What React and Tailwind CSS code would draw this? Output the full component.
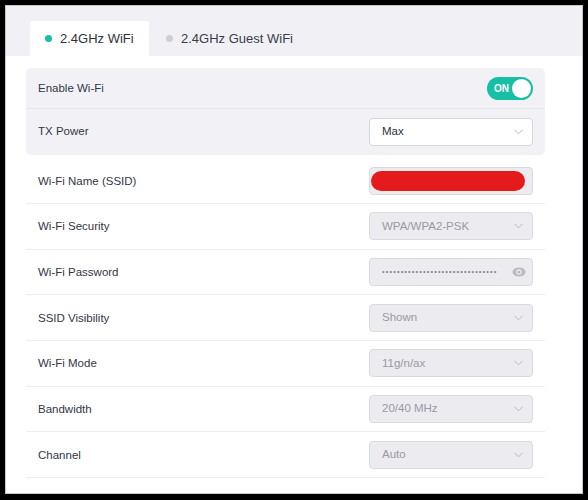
import React from "react";

const ROWS = [
  { label: "Wi-Fi Name (SSID)", kind: "ssid" },
  { label: "Wi-Fi Security", kind: "select", value: "WPA/WPA2-PSK" },
  { label: "Wi-Fi Password", kind: "password" },
  { label: "SSID Visibility", kind: "select", value: "Shown" },
  { label: "Wi-Fi Mode", kind: "select", value: "11g/n/ax" },
  { label: "Bandwidth", kind: "select", value: "20/40 MHz" },
  { label: "Channel", kind: "select", value: "Auto" },
];

function Chevron() {
  return (
    <svg width="9" height="6" viewBox="0 0 9 6" fill="none">
      <path d="M0.5 0.8 L4.5 4.8 L8.5 0.8" stroke="#b9b9c2" strokeWidth="1" />
    </svg>
  );
}

function Select({ value, disabled }) {
  return (
    <div
      className={
        disabled
          ? "flex h-[28px] w-[164px] items-center justify-between rounded-[4px] border border-[#d9d9e0] bg-[#ebebf0] pl-[12px] pr-[9px] text-[11.5px] text-[#9a9aa4]"
          : "flex h-[28px] w-[164px] items-center justify-between rounded-[4px] border border-[#d6d6dd] bg-white pl-[12px] pr-[9px] text-[11.5px] text-[#2e3040]"
      }
    >
      <span>{value}</span>
      <Chevron />
    </div>
  );
}

function Control({ row }) {
  if (row.kind === "ssid") {
    return (
      <div className="flex h-[28px] w-[164px] items-center rounded-[4px] border border-[#d9d9e0] bg-[#ebebf0] pl-[1px] pr-[7px]">
        <div className="h-[20px] w-full rounded-full bg-[#e31b1d]" />
      </div>
    );
  }
  if (row.kind === "password") {
    return (
      <div className="flex h-[28px] w-[164px] items-center justify-between rounded-[4px] border border-[#d9d9e0] bg-[#ebebf0] pl-[12px] pr-[6px]">
        <span className="text-[7.5px] leading-none tracking-[1.1px] text-[#85858f]">
          {"•".repeat(31)}
        </span>
        <svg width="14" height="10" viewBox="0 0 14 10">
          <ellipse cx="7" cy="5" rx="6.5" ry="4.5" fill="#babac3" />
          <circle cx="7" cy="5" r="2.8" fill="#ebebf0" />
          <circle cx="7" cy="5" r="1.6" fill="#babac3" />
        </svg>
      </div>
    );
  }
  return <Select value={row.value} disabled />;
}

export default function App() {
  return (
    <div
      className="h-[500px] w-[588px] bg-black pl-[5px] pt-[5px]"
      style={{ fontFamily: '"Liberation Sans", Arial, sans-serif' }}
    >
      <div className="flex h-[489px] w-[578px] flex-col overflow-hidden border border-[#c6c6cc] bg-white">
        {/* Tabs */}
        <div className="flex h-[50px] shrink-0 items-end bg-[#f1f1f5] pl-[24px]">
          <div className="flex h-[35px] w-[119px] items-center gap-[8px] rounded-t-[3px] bg-white pl-[15px] text-[13px] text-[#30323f]">
            <span className="h-[7px] w-[7px] rounded-full bg-[#17bfa5]" />
            2.4GHz WiFi
          </div>
          <div className="flex h-[35px] items-center gap-[8px] pl-[17px] pr-[16px] text-[13px] text-[#3a3c48]">
            <span className="h-[7px] w-[7px] rounded-full bg-[#cfcfd5]" />
            2.4GHz Guest WiFi
          </div>
        </div>

        <div className="pl-[20px] pr-[37px] pt-[12px]">
          <div className="rounded-[5px] bg-[#f2f2f6]">
            <div className="flex h-[41px] items-center justify-between border-b border-[#e6e6ec] px-[12px] pt-[1px] text-[11.5px] text-[#333647]">
              <span>Enable Wi-Fi</span>
              <div className="flex h-[23px] w-[46px] items-center justify-between rounded-full bg-[#17bfa5] pl-[7px] pr-[2px]">
                <span className="text-[10px] font-bold text-white">ON</span>
                <span className="h-[19px] w-[19px] rounded-full bg-white" />
              </div>
            </div>
            <div className="flex h-[46px] items-center justify-between px-[12px] text-[11.5px] text-[#333647]">
              <span>TX Power</span>
              <Select value="Max" />
            </div>
          </div>

          <div className="mt-[4px]">
            {ROWS.map((row, i) => (
              <div
                key={row.label}
                className={
                  (i === 0 ? "h-[45px] " : "h-[45.7px] ") +
                  "flex items-center justify-between border-b border-[#ececf1] px-[12px] text-[11.5px] text-[#333647]"
                }
              >
                <span className="pt-[1px]">{row.label}</span>
                <Control row={row} />
              </div>
            ))}
          </div>
        </div>
      </div>
    </div>
  );
}
